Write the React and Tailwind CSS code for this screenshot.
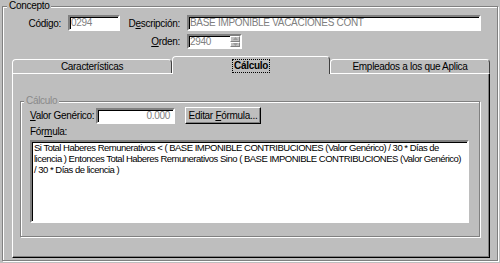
import React from "react";

const font = { fontFamily: '"Liberation Sans", Arial, sans-serif' };

function Sunken({ className = "", children }) {
  return (
    <div className={`border-2 border-t-[#808080] border-l-[#808080] border-b-white border-r-white shadow-[inset_1px_1px_0_#000] bg-white whitespace-nowrap ${className}`}>
      {children}
    </div>
  );
}

function Spinner() {
  return (
    <div className="flex flex-col w-[10px] h-full">
      {[0, 1].map((i) => (
        <div key={i} className="flex-1 flex items-center justify-center bg-[#bebebe] border-t border-l border-white border-b border-r border-b-[#808080] border-r-[#808080]">
          <svg width="5" height="3" viewBox="0 0 5 3">
            <path d={i === 0 ? "M2.5 0 L5 3 L0 3 Z" : "M0 0 L5 0 L2.5 3 Z"} fill="#9a9a9a" />
          </svg>
        </div>
      ))}
    </div>
  );
}

function Tab({ label, selected, className = "" }) {
  if (selected) {
    return (
      <div className={`relative z-10 -mb-px h-[18px] bg-[#bebebe] border-t border-l border-white border-r border-r-[#404040] rounded-t-[4px] flex items-center justify-center ${className}`}>
        <span className="font-bold outline outline-1 outline-dotted outline-black px-[1px] leading-[12px]">Cálculo</span>
      </div>
    );
  }
  return (
    <div className={`h-[14px] bg-[#bebebe] border-t border-l border-white border-r border-r-[#404040] rounded-t-[4px] flex items-center justify-center leading-[12px] whitespace-nowrap ${className}`}>
      {label}
    </div>
  );
}

export default function App() {
  const formula = [
    "Si Total Haberes Remunerativos < ( BASE IMPONIBLE CONTRIBUCIONES (Valor Genérico) / 30 * Días de",
    "licencia ) Entonces Total Haberes Remunerativos Sino ( BASE IMPONIBLE CONTRIBUCIONES (Valor Genérico)",
    "/ 30 * Días de licencia )",
  ];

  return (
    <div className="w-[500px] h-[263px] bg-[#bebebe] overflow-hidden text-[10px] tracking-[-0.3px] text-black px-[2px]" style={font}>
      <fieldset className="h-[261px] w-[496px] border border-[#808080] shadow-[inset_1px_1px_0_#fff,1px_1px_0_#fff]">
        <legend className="ml-[4px] px-[2px] leading-[12px] bg-[#bebebe]">Concepto</legend>

        <div className="flex items-center mt-[3px] h-[16px] whitespace-nowrap">
          <span className="w-[59px] text-right pr-[1px]">Códi<u>g</u>o:</span>
          <Sunken className="ml-[6px] w-[52px] h-[16px] text-[#808080] pl-[1px] leading-[12px]">0294</Sunken>
          <span className="w-[61px] text-right pr-[1px]">D<u>e</u>scripción:</span>
          <Sunken className="ml-[6px] w-[294px] h-[16px] text-[#808080] pl-[1px] leading-[12px]">BASE IMPONIBLE VACACIONES CONT</Sunken>
        </div>

        <div className="flex items-center mt-[3px] h-[15px] whitespace-nowrap">
          <span className="w-[178px] text-right pr-[1px]"><u>O</u>rden:</span>
          <Sunken className="ml-[6px] w-[55px] h-[15px] flex">
            <span className="flex-1 text-[#808080] pl-[1px] leading-[11px]">2940</span>
            <Spinner />
          </Sunken>
        </div>

        <div className="ml-[9px] w-[478px] mt-[7px]">
          <div className="flex items-end h-[17px]">
            <Tab label="Características" className="w-[160px]" />
            <Tab selected className="w-[158px]" />
            <Tab label="Empleados a los que Aplica" className="w-[160px]" />
          </div>

          <div className="h-[185px] border-t border-l border-white border-r border-b border-r-black border-b-black shadow-[inset_-1px_-1px_0_#808080] flex">
            <fieldset className="ml-[7px] mr-[9px] mt-[21px] h-[142px] flex-1 border border-[#808080] shadow-[inset_1px_1px_0_#fff,1px_1px_0_#fff]">
              <legend className="ml-[3px] px-[2px] leading-[12px] bg-[#bebebe] text-[#8a8a8a]">Cálculo</legend>

              <div className="flex items-center pl-[9px] h-[17px] whitespace-nowrap">
                <span className="w-[66px]"><u>V</u>alor Genérico:</span>
                <Sunken className="w-[79px] h-[16px] text-right pr-[3px] text-[#808080] leading-[12px]">0.000</Sunken>
                <button className="ml-[10px] w-[76px] h-[17px] bg-[#bebebe] border border-t-white border-l-white border-b-black border-r-black shadow-[inset_-1px_-1px_0_#808080] leading-[12px] whitespace-nowrap">
                  Editar <u>F</u>órmula...
                </button>
              </div>

              <div className="pl-[9px] mt-[2px] leading-[12px]">Fór<u>m</u>ula:</div>

              <Sunken className="ml-[9px] mt-[2px] w-[439px] h-[83px] pl-[2px] leading-[11px] text-[9.5px] tracking-[-0.5px]">
                {formula.map((l, i) => (
                  <div key={i}>{l}</div>
                ))}
              </Sunken>
            </fieldset>
          </div>
        </div>
      </fieldset>
    </div>
  );
}
